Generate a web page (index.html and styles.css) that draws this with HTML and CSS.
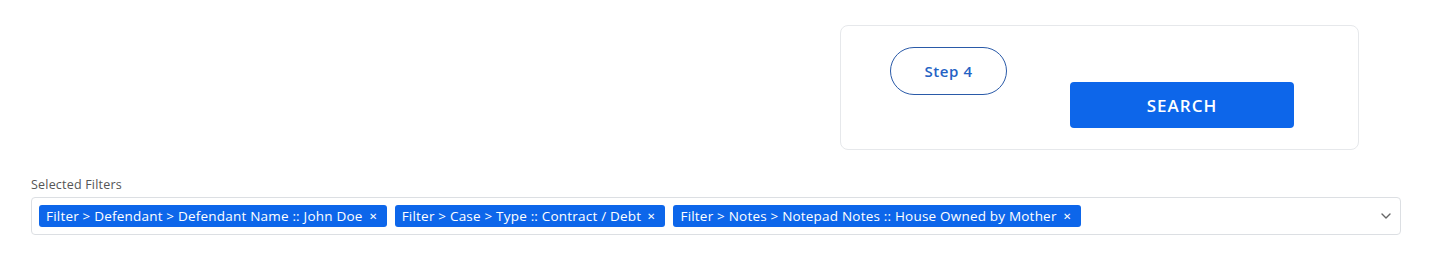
FILE: index.html
```html
<!DOCTYPE html>
<html lang="en">

<head>
    <meta charset="UTF-8">
    <meta name="viewport" content="width=device-width, initial-scale=1.0">
    <title>Search Filters</title>
    <link rel="stylesheet" href="styles.css">
</head>

<body>
    <div class="top-row">
        <div class="action-card">
            <button class="step-btn">Step 4</button>
            <button class="search-btn">SEARCH</button>
        </div>
    </div>

    <div class="filters">
        <label class="filters-label">Selected Filters</label>
        <div class="filters-box">
            <div class="tags">
                <span class="tag">Filter &gt; Defendant &gt; Defendant Name :: John Doe <span class="tag-x">&#x2715;</span></span>
                <span class="tag">Filter &gt; Case &gt; Type :: Contract / Debt <span class="tag-x">&#x2715;</span></span>
                <span class="tag">Filter &gt; Notes &gt; Notepad Notes :: House Owned by Mother <span class="tag-x">&#x2715;</span></span>
            </div>
            <svg class="chevron" width="10" height="6" viewBox="0 0 10 6">
                <path d="M1 1l4 4 4-4" fill="none" stroke="#666" stroke-width="1.4" stroke-linecap="round" stroke-linejoin="round"/>
            </svg>
        </div>
    </div>
</body>

</html>
```

FILE: styles.css
```css
body {
    font-family: 'Open Sans', 'Liberation Sans', sans-serif;
    margin: 0;
    padding: 25px 30px 0 31px;
    background-color: #fff;
    color: #333;
}

.top-row {
    display: flex;
    justify-content: flex-end;
    padding-right: 42px;
}

.action-card {
    width: 519px;
    height: 125px;
    box-sizing: border-box;
    border: 1px solid #e6e8eb;
    border-radius: 8px;
    padding: 21px 0 0 49px;
    display: flex;
    align-items: flex-start;
}

.step-btn {
    width: 117px;
    height: 48px;
    border: 1px solid #2a5aa8;
    border-radius: 24px;
    background-color: #fff;
    color: #2462c4;
    font-family: inherit;
    font-size: 15px;
    font-weight: 600;
    letter-spacing: 0.6px;
    cursor: pointer;
}

.search-btn {
    width: 224px;
    height: 46px;
    margin: 35px 0 0 63px;
    border: none;
    border-radius: 4px;
    background-color: #0d66ea;
    color: #fff;
    font-family: inherit;
    font-size: 17px;
    font-weight: 600;
    letter-spacing: 1px;
    cursor: pointer;
}

.filters {
    margin-top: 26px;
}

.filters-label {
    display: block;
    font-size: 12.5px;
    letter-spacing: 0.2px;
    color: #555;
    margin-bottom: 4px;
}

.filters-box {
    display: flex;
    align-items: center;
    height: 38px;
    box-sizing: border-box;
    border: 1px solid #dcdfe3;
    border-radius: 4px;
    padding: 0 9px 0 7px;
}

.tags {
    flex: 1;
    display: flex;
    gap: 8px;
}

.tag {
    display: inline-flex;
    align-items: center;
    height: 22px;
    padding: 0 10px 0 7px;
    border-radius: 3px;
    background-color: #0d66ea;
    color: #fff;
    font-size: 13.5px;
    letter-spacing: 0.2px;
    white-space: nowrap;
}

.tag-x {
    font-size: 10px;
    margin-left: 6px;
}

.chevron {
    display: block;
}
```
